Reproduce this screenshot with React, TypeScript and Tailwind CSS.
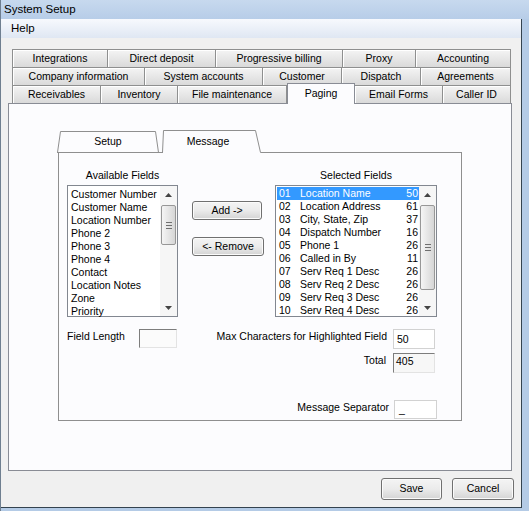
import React from 'react';

type TabDef = { label: string; w: string; active?: boolean };

const rows: TabDef[][] = [
  [
    { label: 'Integrations', w: 'w-[96px]' },
    { label: 'Direct deposit', w: 'w-[108px]' },
    { label: 'Progressive billing', w: 'w-[127px]' },
    { label: 'Proxy', w: 'w-[73px]' },
    { label: 'Accounting', w: 'w-[95px]' },
  ],
  [
    { label: 'Company information', w: 'w-[133px]' },
    { label: 'System accounts', w: 'w-[118px]' },
    { label: 'Customer', w: 'w-[79px]' },
    { label: 'Dispatch', w: 'w-[79px]' },
    { label: 'Agreements', w: 'w-[90px]' },
  ],
  [
    { label: 'Receivables', w: 'w-[89px]' },
    { label: 'Inventory', w: 'w-[77px]' },
    { label: 'File maintenance', w: 'w-[109px]' },
    { label: 'Paging', w: 'w-[68px]', active: true },
    { label: 'Email Forms', w: 'w-[88px]' },
    { label: 'Caller ID', w: 'w-[68px]' },
  ],
];

const available = [
  'Customer Number',
  'Customer Name',
  'Location Number',
  'Phone 2',
  'Phone 3',
  'Phone 4',
  'Contact',
  'Location Notes',
  'Zone',
  'Priority',
];

const selected: [string, string, number][] = [
  ['01', 'Location Name', 50],
  ['02', 'Location Address', 61],
  ['03', 'City, State, Zip', 37],
  ['04', 'Dispatch Number', 16],
  ['05', 'Phone 1', 26],
  ['06', 'Called in By', 11],
  ['07', 'Serv Req 1 Desc', 26],
  ['08', 'Serv Req 2 Desc', 26],
  ['09', 'Serv Req 3 Desc', 26],
  ['10', 'Serv Req 4 Desc', 26],
];

function Tab({ tab, first }: { tab: TabDef; first: boolean }) {
  if (tab.active) {
    return (
      <div
        className={`${tab.w} relative z-10 -mb-px flex h-[21px] justify-center border-x border-t border-[#898c95] bg-[#fcfcfe] pt-[3px] leading-[13px]`}
      >
        {tab.label}
      </div>
    );
  }
  return (
    <div
      className={`${tab.w} flex h-[18px] items-center justify-center border-t border-r border-[#8e8f8f] bg-gradient-to-b from-[#f4f4f4] to-[#dadada] shadow-[inset_1px_1px_0_#ffffff] ${first ? 'border-l' : ''}`}
    >
      {tab.label}
    </div>
  );
}

function Arrow({ down }: { down?: boolean }) {
  return (
    <div className="flex h-[17px] items-center justify-center">
      <svg width="7" height="4" viewBox="0 0 7 4">
        <path d={down ? 'M0 0 L7 0 L3.5 4Z' : 'M3.5 0 L7 4 L0 4Z'} fill="#444" />
      </svg>
    </div>
  );
}

function ScrollBar({ thumb }: { thumb: string }) {
  return (
    <div className="flex h-full w-[17px] flex-col bg-[#f6f6f6]">
      <Arrow />
      <div className="flex-1 px-px pt-[2px]">
        <div
          className={`${thumb} flex flex-col items-center justify-center gap-[2px] rounded-[2px] border border-[#979797] bg-gradient-to-r from-[#f5f5f5] to-[#d6d6d6]`}
        >
          <div className="h-px w-[6px] bg-[#6f6f6f]" />
          <div className="h-px w-[6px] bg-[#6f6f6f]" />
          <div className="h-px w-[6px] bg-[#6f6f6f]" />
        </div>
      </div>
      <Arrow down />
    </div>
  );
}

function Button({ label, w, h }: { label: string; w: string; h: string }) {
  return (
    <div
      className={`${w} ${h} flex items-center justify-center rounded-[3px] border border-[#707070] bg-gradient-to-b from-[#f4f4f4] via-[#ebebeb] to-[#d4d4d4] shadow-[inset_0_0_0_1px_#fbfbfb]`}
    >
      {label}
    </div>
  );
}

export default function App() {
  return (
    <div className="h-[511px] w-[529px] overflow-hidden border-l border-[#6f7f90] bg-[#b4cbe6] font-['Liberation_Sans',Arial,sans-serif] text-[10.5px] text-black">
      <div className="flex h-[19px] items-center bg-gradient-to-b from-[#c7d9ee] to-[#b7cde8] pl-[3px] text-[11.5px]">
        System Setup
      </div>

      <div className="flex h-[489px] w-[521px] flex-col border-r border-b border-[#34434f] bg-[#f0f0f0]">
        <div className="flex h-[19px] items-center bg-gradient-to-b from-[#f7f9fd] to-[#dfe7f3] pl-[10px] text-[11.5px]">
          Help
        </div>

        <div className="flex flex-1 flex-col pt-[11px]">
          {rows.map((row, i) => (
            <div key={i} className="ml-[11px] flex h-[18px] items-end">
              {row.map((t, j) => (
                <Tab key={t.label} tab={t} first={j === 0} />
              ))}
            </div>
          ))}

          <div className="ml-[7px] h-[368px] w-[504px] border border-[#898c95] bg-[#fcfcfe] pt-[26px]">
            <div className="relative ml-[48px] flex h-[23px] w-[405px] pt-[5px] leading-[13px]">
              <svg className="absolute inset-0" width="405" height="23" viewBox="0 0 405 23">
                <path d="M0.5 22.5 L3.5 1.5 L98.5 1.5 L101.5 22.5" fill="none" stroke="#8f8f8f" />
                <path d="M0 22.5 H106" stroke="#8f8f8f" />
                <path d="M105.5 22.5 L106.5 0.5 L198.5 0.5 L203.5 22.5 H405" fill="none" stroke="#8f8f8f" />
              </svg>
              <span className="relative w-[102px] text-center">Setup</span>
              <span className="relative w-[98px] text-center">Message</span>
            </div>

            <div className="ml-[49px] h-[268px] w-[404px] border-x border-b border-[#8f8f8f] pt-[16px]">
              <div className="flex items-start">
                <div className="ml-[8px] flex w-[111px] flex-col">
                  <div className="mb-[3px] h-[13px] text-center leading-[13px]">Available Fields</div>
                  <div className="flex h-[132px] border border-[#828790] bg-white">
                    <div className="flex-1 pl-[3px] pt-[2px] leading-[13px]">
                      {available.map((a) => (
                        <div key={a} className="h-[13px] whitespace-nowrap">
                          {a}
                        </div>
                      ))}
                    </div>
                    <ScrollBar thumb="h-[40px]" />
                  </div>
                </div>

                <div className="ml-[14px] mt-[32px] flex w-[72px] flex-col items-start">
                  <Button label="Add ->" w="w-[70px]" h="h-[19px]" />
                  <div className="mt-[17px]">
                    <Button label="<- Remove" w="w-[72px]" h="h-[19px]" />
                  </div>
                </div>

                <div className="ml-[11px] flex w-[162px] flex-col">
                  <div className="mb-[3px] h-[13px] text-center leading-[13px]">Selected Fields</div>
                  <div className="flex h-[132px] border border-[#828790] bg-white">
                    <div className="flex-1 pt-px leading-[13px]">
                      {selected.map(([code, name, len], i) => (
                        <div
                          key={code}
                          className={`ml-px flex h-[13px] pl-[2px] pr-[1px] whitespace-nowrap ${i === 0 ? 'bg-[#3399ff] text-white' : ''}`}
                        >
                          <span className="w-[21px]">{code}</span>
                          <span className="flex-1">{name}</span>
                          <span className="text-right">{len}</span>
                        </div>
                      ))}
                    </div>
                    <ScrollBar thumb="h-[85px]" />
                  </div>
                </div>
              </div>

              <div className="mt-[12px] flex items-start leading-[13px]">
                <div className="ml-[8px] flex items-start">
                  <span className="w-[72px] pt-px">Field Length</span>
                  <div className="h-[19px] w-[38px] border border-t-[#7d7d7d] border-l-[#7d7d7d] border-r-[#e3e3e3] border-b-[#e3e3e3] bg-[#fbfbfb]" />
                </div>

                <div className="ml-auto mr-[24px] flex flex-col items-end">
                  <div className="flex items-start">
                    <span className="pt-px">Max Characters for Highlighted Field</span>
                    <div className="ml-[6px] mr-[2px] flex h-[20px] w-[42px] items-end border border-[#d2d2d2] bg-white pb-[2px] pl-[3px]">
                      50
                    </div>
                  </div>
                  <div className="mt-[4px] flex items-start">
                    <span className="pt-px">Total</span>
                    <div className="ml-[7px] mr-[2px] h-[20px] w-[42px] border border-t-[#7d7d7d] border-l-[#7d7d7d] border-r-[#e3e3e3] border-b-[#e3e3e3] bg-[#f7f7f7] pl-[2px] pt-px">
                      405
                    </div>
                  </div>
                  <div className="mt-[27px] flex items-start">
                    <span className="pt-px">Message Separator</span>
                    <div className="ml-[5px] flex h-[19px] w-[43px] items-end border border-[#d2d2d2] bg-white pb-[2px] pl-[4px]">
                      _
                    </div>
                  </div>
                </div>
              </div>
            </div>
          </div>

          <div className="mt-[7px] flex justify-end gap-[10px] pr-[7px]">
            <Button label="Save" w="w-[61px]" h="h-[22px]" />
            <Button label="Cancel" w="w-[62px]" h="h-[22px]" />
          </div>
        </div>
      </div>
    </div>
  );
}
